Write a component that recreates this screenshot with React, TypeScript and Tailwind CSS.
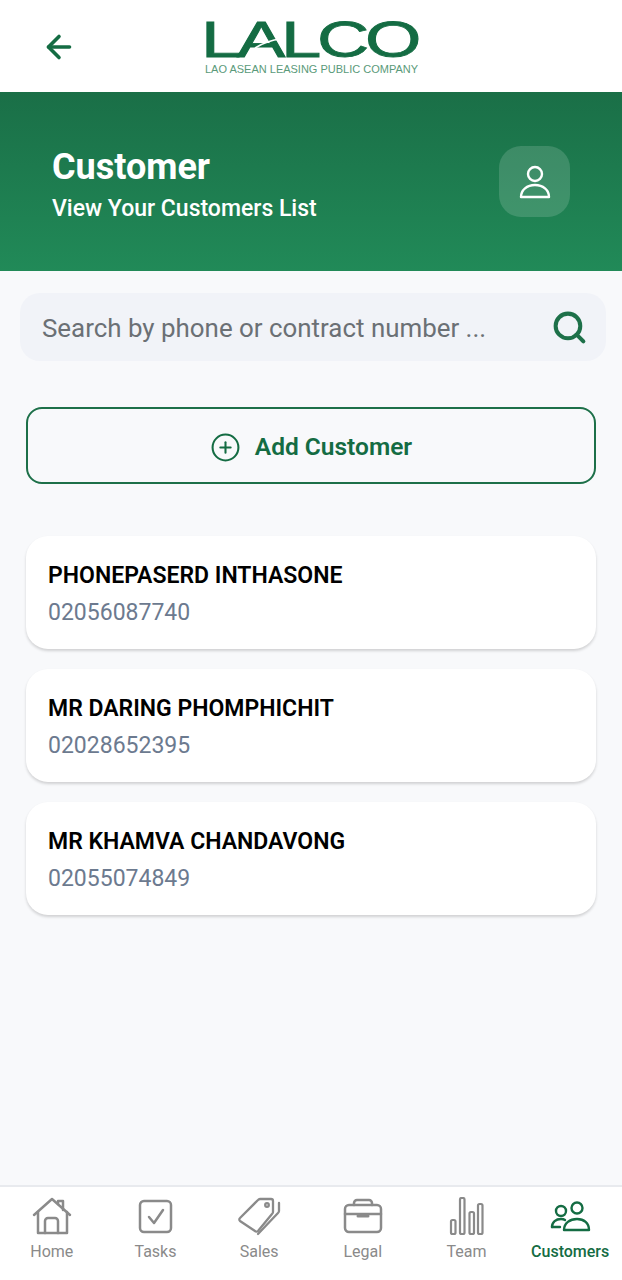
import React from 'react';
import { ArrowLeft, CirclePlus, Search } from 'lucide-react';

const customers = [
  { name: 'PHONEPASERD INTHASONE', phone: '02056087740' },
  { name: 'MR DARING PHOMPHICHIT', phone: '02028652395' },
  { name: 'MR KHAMVA CHANDAVONG', phone: '02055074849' },
];

const Logo = () => (
  <svg width="220" height="92" viewBox="0 0 220 92" className="block">
    <text x="0" y="57" textLength="216" lengthAdjust="spacingAndGlyphs" letterSpacing="-3" fontFamily="Liberation Sans" fontSize="50" fill="#146c43" stroke="#146c43" strokeWidth="0.8">LALCO</text>
    <text x="4" y="73" textLength="213" lengthAdjust="spacingAndGlyphs" fontFamily="Liberation Sans" fontSize="10.5" fill="#5a9a7a">LAO ASEAN LEASING PUBLIC COMPANY</text>
    {/* swoosh across the A */}
    <path d="M54 48C62 43 70 40 80 39" fill="none" stroke="white" strokeWidth="1.6" />
  </svg>
);

const HomeIcon = () => (
  <svg width="44" height="40" viewBox="0 0 44 40" fill="none" stroke="currentColor" strokeWidth="2.5" strokeLinejoin="round" strokeLinecap="round">
    <path d="M4 18 22 2l18 16" />
    <path d="M28 7V4h5v9" />
    <path d="M8 15v21h29V15" />
    <path d="M15 36V24a3 3 0 0 1 3-3h7a3 3 0 0 1 3 3v12" />
  </svg>
);

const TasksIcon = () => (
  <svg width="44" height="40" viewBox="0 0 44 40" fill="none" stroke="currentColor" strokeWidth="2.5" strokeLinejoin="round" strokeLinecap="round">
    <rect x="7" y="4" width="31" height="31" rx="4" />
    <path d="M16 20 21 26 30 13" />
  </svg>
);

const SalesIcon = () => (
  <svg width="44" height="40" viewBox="0 0 44 40" fill="none" stroke="currentColor" strokeWidth="2.3" strokeLinejoin="round" strokeLinecap="round">
    <path d="M3 21 21 3a3 3 0 0 1 2-1h11a2 2 0 0 1 2 2v11a3 3 0 0 1-1 2L21 34a2 2 0 0 1-3 0L3 24a2 2 0 0 1 0-3Z" />
    <circle cx="30" cy="8" r="1.8" />
    <path d="M42 6v8a3 3 0 0 1-1 2L21 37" />
  </svg>
);

const LegalIcon = () => (
  <svg width="44" height="40" viewBox="0 0 44 40" fill="none" stroke="currentColor" strokeWidth="2.5" strokeLinejoin="round" strokeLinecap="round">
    <rect x="4" y="8" width="36" height="27" rx="4" />
    <path d="M13 8V6a3 3 0 0 1 3-3h12a3 3 0 0 1 3 3v2" />
    <path d="M4 17h36" />
    <path d="M17 19h10" strokeWidth="3" />
  </svg>
);

const TeamIcon = () => (
  <svg width="44" height="40" viewBox="0 0 44 40" fill="none" stroke="currentColor" strokeWidth="2.2" strokeLinejoin="round">
    <rect x="7" y="23" width="4.5" height="14" rx="1.5" />
    <rect x="16" y="1" width="4.5" height="36" rx="1.5" />
    <rect x="25.5" y="15" width="4.5" height="22" rx="1.5" />
    <rect x="34" y="7" width="4.5" height="30" rx="1.5" />
  </svg>
);

const CustomersIcon = () => (
  <svg width="44" height="40" viewBox="0 0 44 40" fill="none" stroke="currentColor" strokeWidth="2.4" strokeLinejoin="round" strokeLinecap="round">
    <circle cx="13" cy="14" r="5" />
    <circle cx="29" cy="11" r="5.5" />
    <path d="M4 30c0-5 4-8 9-8 1.5 0 3 .3 4 1" />
    <path d="M4 30h8" />
    <path d="M16 33c0-7 6-11 13-11s12 4 12 11Z" />
  </svg>
);

const navItems = [
  { label: 'Home', icon: HomeIcon },
  { label: 'Tasks', icon: TasksIcon },
  { label: 'Sales', icon: SalesIcon },
  { label: 'Legal', icon: LegalIcon },
  { label: 'Team', icon: TeamIcon },
  { label: 'Customers', icon: CustomersIcon, active: true },
];

export default function App() {
  return (
    <div className="flex h-[1280px] w-[622px] flex-col overflow-hidden bg-[#f8f9fb] font-['Roboto',sans-serif]">
      {/* top bar */}
      <header className="flex h-[92px] shrink-0 items-center bg-white pl-[41px]">
        <ArrowLeft size={36} strokeWidth={2.4} className="mb-[-1px] text-[#146c43]" />
        <div className="ml-[124px]">
          <Logo />
        </div>
      </header>

      {/* hero */}
      <section className="flex h-[179px] shrink-0 items-center justify-between bg-gradient-to-b from-[#1a6f47] to-[#218a58] px-[52px]">
        <div className="pt-[5px]">
          <h1 className="text-[36px] leading-[44px] font-bold text-white">Customer</h1>
          <p className="mt-[6px] text-[23px] leading-[28px] font-medium text-white">View Your Customers List</p>
        </div>
        <div className="flex h-[71px] w-[71px] items-center justify-center rounded-[22px] bg-white/15">
          <svg width="32" height="34" viewBox="0 0 32 34" fill="none" stroke="white" strokeWidth="2.4" strokeLinejoin="round">
            <circle cx="16" cy="9" r="7" />
            <path d="M2 32c0-7 6-12 14-12s14 5 14 12Z" />
          </svg>
        </div>
      </section>

      <main className="flex-1 px-[26px]">
        <div className="ml-[-6px] mr-[-10px] mt-[22px] flex h-[68px] items-center justify-between rounded-[20px] bg-[#f1f3f8] pl-[22px] pr-[18px]">
          <span className="mt-[2px] text-[25.9px] text-[#6b7075]">Search by phone or contract number ...</span>
          <Search size={37} strokeWidth={2.6} className="text-[#1d7049]" />
        </div>

        <button className="mt-[46px] flex h-[77px] w-full items-center justify-center gap-[14px] rounded-[16px] border-[2.5px] border-[#1d7049] pt-[3px] text-[24.5px] font-semibold text-[#146c43]">
          <CirclePlus size={31} strokeWidth={1.6} />
          Add Customer
        </button>

        <div className="mt-[52px] flex flex-col gap-[20px]">
          {customers.map((customer) => (
            <div key={customer.phone} className="flex h-[113px] flex-col justify-center rounded-[22px] bg-white pt-[4px] pl-[22px] shadow-[0_2px_3px_rgba(0,0,0,0.16)]">
              <div className="text-[23px] leading-[30px] font-semibold text-black">{customer.name}</div>
              <div className="mt-[7px] text-[23px] leading-[30px] text-[#6c7a8f]">{customer.phone}</div>
            </div>
          ))}
        </div>
      </main>

      {/* bottom nav */}
      <nav className="grid h-[95px] shrink-0 grid-cols-6 border-t-[2px] border-[#e8eaee] bg-white pt-[10px]">
        {navItems.map((item) => (
          <div key={item.label} className={`flex flex-col items-center ${item.active ? 'text-[#146c43]' : 'text-[#8a8a8a]'}`}>
            <item.icon />
            <span className={`mt-[5px] text-[16px] leading-[20px] ${item.active ? 'font-medium' : ''}`}>{item.label}</span>
          </div>
        ))}
      </nav>
    </div>
  );
}
